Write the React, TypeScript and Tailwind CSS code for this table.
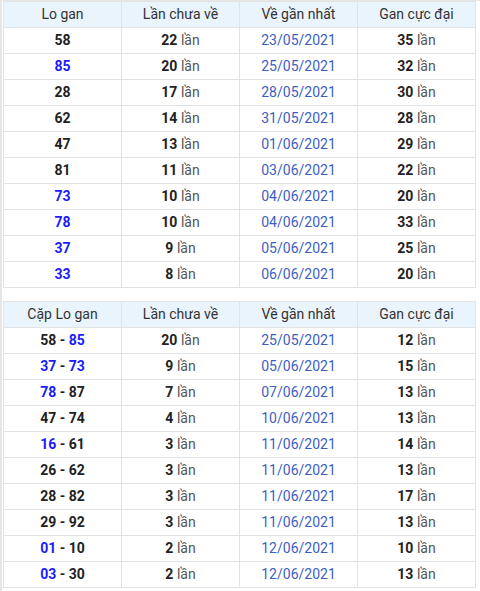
const FONT = { fontFamily: "Roboto, 'Noto Sans', Arial, sans-serif" };

type Num = { v: string; blue?: boolean };

const LO_GAN: { lo: Num; chua: number; ve: string; max: number }[] = [
  { lo: { v: "58" }, chua: 22, ve: "23/05/2021", max: 35 },
  { lo: { v: "85", blue: true }, chua: 20, ve: "25/05/2021", max: 32 },
  { lo: { v: "28" }, chua: 17, ve: "28/05/2021", max: 30 },
  { lo: { v: "62" }, chua: 14, ve: "31/05/2021", max: 28 },
  { lo: { v: "47" }, chua: 13, ve: "01/06/2021", max: 29 },
  { lo: { v: "81" }, chua: 11, ve: "03/06/2021", max: 22 },
  { lo: { v: "73", blue: true }, chua: 10, ve: "04/06/2021", max: 20 },
  { lo: { v: "78", blue: true }, chua: 10, ve: "04/06/2021", max: 33 },
  { lo: { v: "37", blue: true }, chua: 9, ve: "05/06/2021", max: 25 },
  { lo: { v: "33", blue: true }, chua: 8, ve: "06/06/2021", max: 20 },
];

const CAP_LO: { a: Num; b: Num; chua: number; ve: string; max: number }[] = [
  { a: { v: "58" }, b: { v: "85", blue: true }, chua: 20, ve: "25/05/2021", max: 12 },
  { a: { v: "37", blue: true }, b: { v: "73", blue: true }, chua: 9, ve: "05/06/2021", max: 15 },
  { a: { v: "78", blue: true }, b: { v: "87" }, chua: 7, ve: "07/06/2021", max: 13 },
  { a: { v: "47" }, b: { v: "74" }, chua: 4, ve: "10/06/2021", max: 13 },
  { a: { v: "16", blue: true }, b: { v: "61" }, chua: 3, ve: "11/06/2021", max: 14 },
  { a: { v: "26" }, b: { v: "62" }, chua: 3, ve: "11/06/2021", max: 13 },
  { a: { v: "28" }, b: { v: "82" }, chua: 3, ve: "11/06/2021", max: 17 },
  { a: { v: "29" }, b: { v: "92" }, chua: 3, ve: "11/06/2021", max: 13 },
  { a: { v: "01", blue: true }, b: { v: "10" }, chua: 2, ve: "12/06/2021", max: 10 },
  { a: { v: "03", blue: true }, b: { v: "30" }, chua: 2, ve: "12/06/2021", max: 13 },
];

function N({ n }: { n: Num }) {
  return <span className={n.blue ? "text-[#1a1aff]" : "text-[#222]"}>{n.v}</span>;
}

function Lan({ n }: { n: number }) {
  return (
    <>
      <b className="font-bold text-[#222]">{n}</b> <span className="text-[#555]">lần</span>
    </>
  );
}

const td = "h-[26px] p-0 border border-[#e3e3e3] text-center align-middle";

function Head({ first }: { first: string }) {
  return (
    <thead>
      <tr className="bg-[#eaf4fd] text-[#333]">
        <th className={`${td} font-normal w-[118px]`}>{first}</th>
        <th className={`${td} font-normal w-[118px]`}>Lần chưa về</th>
        <th className={`${td} font-normal w-[118px]`}>Về gần nhất</th>
        <th className={`${td} font-normal`}>Gan cực đại</th>
      </tr>
    </thead>
  );
}

export default function App() {
  return (
    <div className="w-[480px] h-[591px] bg-white border-l-2 border-t border-[#e6e6e6] pl-[1px] text-[14px] overflow-hidden" style={FONT}>
      <table className="w-[473px] border-collapse table-fixed">
        <Head first="Lo gan" />
        <tbody>
          {LO_GAN.map((r, i) => (
            <tr key={i}>
              <td className={`${td} font-bold`}><N n={r.lo} /></td>
              <td className={td}><Lan n={r.chua} /></td>
              <td className={`${td} text-[#3c5ec4]`}>{r.ve}</td>
              <td className={td}><Lan n={r.max} /></td>
            </tr>
          ))}
        </tbody>
      </table>
      <table className="w-[473px] border-collapse table-fixed mt-[13px]">
        <Head first="Cặp Lo gan" />
        <tbody>
          {CAP_LO.map((r, i) => (
            <tr key={i}>
              <td className={`${td} font-bold`}>
                <N n={r.a} /> <span className="text-[#222]">-</span> <N n={r.b} />
              </td>
              <td className={td}><Lan n={r.chua} /></td>
              <td className={`${td} text-[#3c5ec4]`}>{r.ve}</td>
              <td className={td}><Lan n={r.max} /></td>
            </tr>
          ))}
        </tbody>
      </table>
    </div>
  );
}
